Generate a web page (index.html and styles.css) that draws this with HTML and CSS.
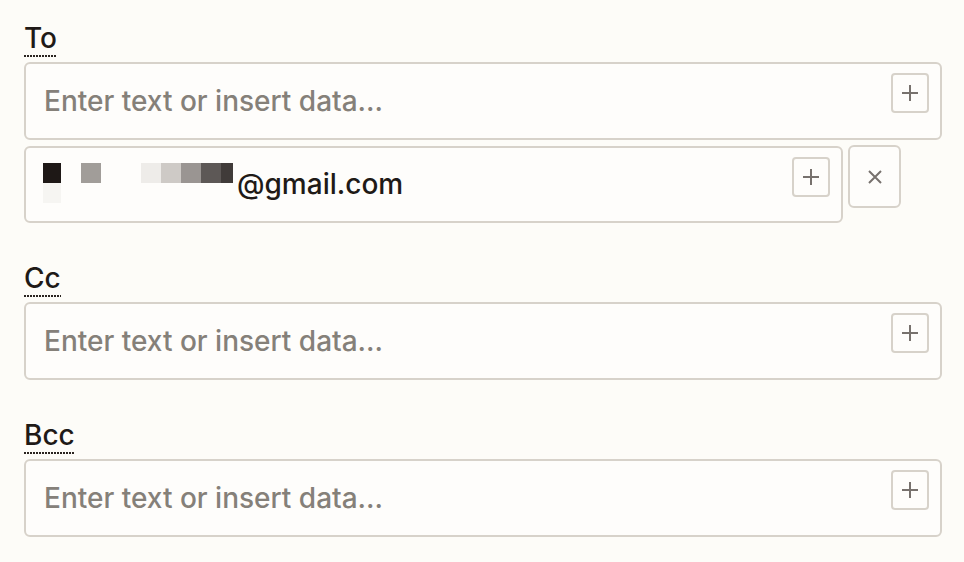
FILE: index.html
```html
<!DOCTYPE html>
<html>
<head>
<meta charset="utf-8">
<link rel="stylesheet" href="styles.css">
</head>
<body>
<div class="form">
  <div class="field">
    <div class="label"><span class="label-text">To</span></div>
    <div class="input">
      <span class="placeholder">Enter text or insert data...</span>
      <button class="add" aria-label="Insert data"><svg viewBox="0 0 18 18" width="18" height="18"><path d="M9 1v16M1 9h16" stroke="#77716d" stroke-width="2" fill="none"/></svg></button>
    </div>
    <div class="row">
      <div class="input input-short">
        <span class="mosaic">
          <i class="c1"></i><i></i><i class="c2"></i><i></i><i></i><i class="c3"></i><i class="c4"></i><i class="c5"></i><i class="c6"></i><i class="c7"></i>
          <i class="c8"></i><i></i><i></i><i></i><i></i><i></i><i></i><i></i><i></i><i></i>
        </span>
        <span class="value">@gmail.com</span>
        <button class="add" aria-label="Insert data"><svg viewBox="0 0 18 18" width="18" height="18"><path d="M9 1v16M1 9h16" stroke="#77716d" stroke-width="2" fill="none"/></svg></button>
      </div>
      <button class="remove" aria-label="Remove"><svg viewBox="0 0 14 14" width="14" height="14"><path d="M1 1l12 12M13 1L1 13" stroke="#77716d" stroke-width="2" fill="none"/></svg></button>
    </div>
  </div>

  <div class="field">
    <div class="label"><span class="label-text">Cc</span></div>
    <div class="input">
      <span class="placeholder">Enter text or insert data...</span>
      <button class="add" aria-label="Insert data"><svg viewBox="0 0 18 18" width="18" height="18"><path d="M9 1v16M1 9h16" stroke="#77716d" stroke-width="2" fill="none"/></svg></button>
    </div>
  </div>

  <div class="field">
    <div class="label"><span class="label-text">Bcc</span></div>
    <div class="input">
      <span class="placeholder">Enter text or insert data...</span>
      <button class="add" aria-label="Insert data"><svg viewBox="0 0 18 18" width="18" height="18"><path d="M9 1v16M1 9h16" stroke="#77716d" stroke-width="2" fill="none"/></svg></button>
    </div>
  </div>
</div>
</body>
</html>
```

FILE: styles.css
```css
html, body {
  margin: 0;
  padding: 0;
  background: #fdfcf8;
}

body {
  font-family: Inter, "Noto Sans", sans-serif;
  color: #1f1a17;
}

.form {
  padding: 22px 22px 0 24px;
  display: flex;
  flex-direction: column;
  gap: 39px;
}

.field {
  display: flex;
  flex-direction: column;
}

.label {
  margin-bottom: 5px;
}

.label-text {
  display: inline-block;
  font-size: 28px;
  font-weight: 500;
  line-height: 32px;
  padding-bottom: 3px;
  background-image: repeating-linear-gradient(to right, #2a2420 0 2px, transparent 2px 3px);
  background-size: 100% 2px;
  background-position: 0 100%;
  background-repeat: no-repeat;
}

.input {
  box-sizing: border-box;
  display: flex;
  align-items: flex-start;
  min-height: 78px;
  border: 2px solid #d7d2ca;
  border-radius: 6px;
  background: #fefdfb;
  padding: 0 11px 0 18px;
}

.placeholder {
  align-self: center;
  font-size: 28px;
  font-weight: 500;
  color: #858079;
}

.add {
  box-sizing: border-box;
  margin: 9px 0 0 auto;
  width: 38px;
  height: 40px;
  padding: 0;
  border: 2px solid #d7d2ca;
  border-radius: 4px;
  background: #fefdfb;
  display: flex;
  align-items: center;
  justify-content: center;
  flex: none;
}

.row {
  display: flex;
  align-items: flex-start;
  gap: 5px;
  margin-top: 6px;
}

.input-short {
  width: 819px;
  min-height: 77px;
  flex: none;
}

.mosaic {
  display: grid;
  grid-template-columns: repeat(9, 20px) 12px;
  grid-auto-rows: 20px;
  margin: 15px 0 0 -3px;
  flex: none;
}

.mosaic i {
  display: block;
}

.mosaic .c1 { background: #1e1816; width: 18px; margin-left: 2px; }
.mosaic .c2 { background: #a19d99; }
.mosaic .c3 { background: #eeece9; }
.mosaic .c4 { background: #cecac6; }
.mosaic .c5 { background: #9a9592; }
.mosaic .c6 { background: #5d5856; }
.mosaic .c7 { background: #403b39; }
.mosaic .c8 { background: #f6f5f2; width: 18px; margin-left: 2px; }

.value {
  align-self: center;
  font-size: 28px;
  font-weight: 500;
  color: #1f1a17;
  margin-left: 4px;
  margin-top: -2px;
}

.remove {
  box-sizing: border-box;
  width: 53px;
  height: 63px;
  margin-top: -1px;
  padding: 0;
  border: 2px solid #d7d2ca;
  border-radius: 6px;
  background: #fefdfb;
  display: flex;
  align-items: center;
  justify-content: center;
  flex: none;
}
```
